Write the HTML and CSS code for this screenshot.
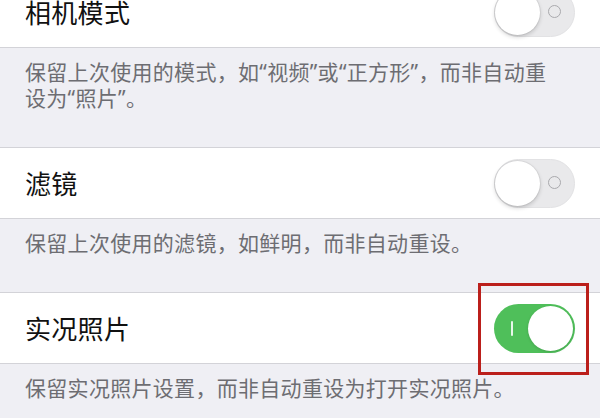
FILE: index.html
```html
<!DOCTYPE html>
<html lang="zh-CN">
<head>
<meta charset="utf-8">
<title>保留设置</title>
<link rel="stylesheet" href="styles.css">
</head>
<body>
<div class="page">
  <section class="group group-first">
    <div class="row">
      <span class="title">相机模式</span>
      <span class="switch off"><span class="ring"></span><span class="knob"></span></span>
    </div>
    <p class="note">保留上次使用的模式，如“视频”或“正方形”，而非自动重设为“照片”。</p>
  </section>
  <section class="group">
    <div class="row">
      <span class="title">滤镜</span>
      <span class="switch off"><span class="ring"></span><span class="knob"></span></span>
    </div>
    <p class="note">保留上次使用的滤镜，如鲜明，而非自动重设。</p>
  </section>
  <section class="group">
    <div class="row">
      <span class="title">实况照片</span>
      <span class="switch on"><span class="bar"></span><span class="knob"></span><span class="mark"></span></span>
    </div>
    <p class="note">保留实况照片设置，而非自动重设为打开实况照片。</p>
  </section>
</div>
</body>
</html>
```
FILE: styles.css
```css
html, body {
  margin: 0;
  padding: 0;
}
body {
  width: 600px;
  height: 418px;
  overflow: hidden;
  background: #efeff4;
  font-family: "Noto Sans CJK SC", "Noto Sans", sans-serif;
}
.page {
  display: flex;
  flex-direction: column;
}
.group {
  border-top: 1px solid #d3d3d8;
}
.group-first {
  margin-top: -24px;
}
.row {
  height: 70px;
  background: #ffffff;
  border-bottom: 1px solid #d3d3d8;
  display: flex;
  align-items: center;
  justify-content: space-between;
  padding: 0 25px 0 25px;
}
.title {
  font-size: 26px;
  color: #111111;
  letter-spacing: 0.3px;
  line-height: 1;
}
.note {
  margin: 0;
  padding: 11px 36px 36px 25px;
  font-family: "Noto Sans", "Noto Sans CJK SC", sans-serif;
  font-size: 21px;
  line-height: 26px;
  color: #6d6d72;
  letter-spacing: 0.3px;
}
.switch {
  position: relative;
  display: block;
  width: 81px;
  height: 49px;
  border-radius: 25px;
  box-sizing: border-box;
}
.switch.off {
  background: #e9e9eb;
  border: 1px solid #e2e2e4;
}
.switch.on {
  background: #4fbf5a;
}
.knob {
  position: absolute;
  top: 1px;
  width: 45px;
  height: 45px;
  border-radius: 50%;
  background: #ffffff;
}
.switch.off .knob {
  left: 0;
  top: 1px;
  box-shadow: 0 2px 4px rgba(0, 0, 0, 0.18), 0 0 0 1px rgba(0, 0, 0, 0.05);
}
.switch.on .knob {
  right: 2px;
  top: 2px;
  box-shadow: 0 1px 3px rgba(0, 0, 0, 0.15);
}
.ring {
  position: absolute;
  right: 13px;
  top: 16px;
  width: 11px;
  height: 11px;
  border: 1.5px solid #a9a9ad;
  border-radius: 50%;
}
.bar {
  position: absolute;
  left: 17px;
  top: 17px;
  width: 2px;
  height: 15px;
  background: #e8f7ea;
  border-radius: 1px;
}
.mark {
  position: absolute;
  left: -16px;
  top: -21px;
  right: -14px;
  bottom: -22px;
  border: 3px solid #bb1f1b;
}
```
